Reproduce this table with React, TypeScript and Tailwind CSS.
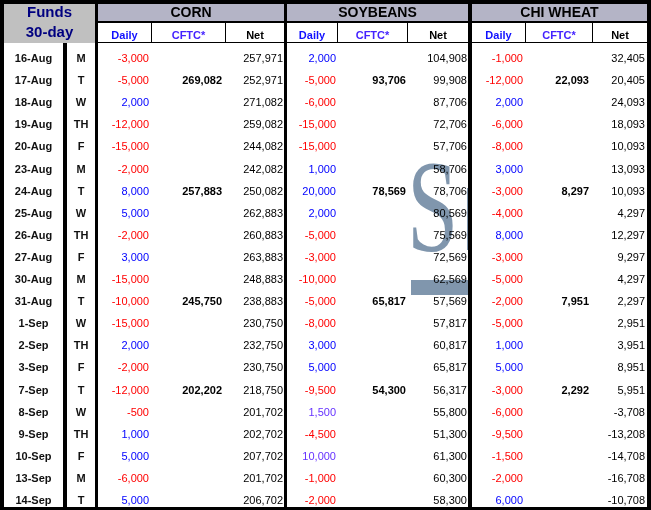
import React from "react";

type Row = {
  date: string;
  day: string;
  corn: [string, string, string];
  soy: [string, string, string];
  wheat: [string, string, string];
};

const r = (date: string, day: string, ...v: string[]): Row => ({
  date,
  day,
  corn: [v[0], v[1], v[2]],
  soy: [v[3], v[4], v[5]],
  wheat: [v[6], v[7], v[8]],
});

const rows: Row[] = [
  r("16-Aug", "M", "-3,000", "", "257,971", "2,000", "", "104,908", "-1,000", "", "32,405"),
  r("17-Aug", "T", "-5,000", "269,082", "252,971", "-5,000", "93,706", "99,908", "-12,000", "22,093", "20,405"),
  r("18-Aug", "W", "2,000", "", "271,082", "-6,000", "", "87,706", "2,000", "", "24,093"),
  r("19-Aug", "TH", "-12,000", "", "259,082", "-15,000", "", "72,706", "-6,000", "", "18,093"),
  r("20-Aug", "F", "-15,000", "", "244,082", "-15,000", "", "57,706", "-8,000", "", "10,093"),
  r("23-Aug", "M", "-2,000", "", "242,082", "1,000", "", "58,706", "3,000", "", "13,093"),
  r("24-Aug", "T", "8,000", "257,883", "250,082", "20,000", "78,569", "78,706", "-3,000", "8,297", "10,093"),
  r("25-Aug", "W", "5,000", "", "262,883", "2,000", "", "80,569", "-4,000", "", "4,297"),
  r("26-Aug", "TH", "-2,000", "", "260,883", "-5,000", "", "75,569", "8,000", "", "12,297"),
  r("27-Aug", "F", "3,000", "", "263,883", "-3,000", "", "72,569", "-3,000", "", "9,297"),
  r("30-Aug", "M", "-15,000", "", "248,883", "-10,000", "", "62,569", "-5,000", "", "4,297"),
  r("31-Aug", "T", "-10,000", "245,750", "238,883", "-5,000", "65,817", "57,569", "-2,000", "7,951", "2,297"),
  r("1-Sep", "W", "-15,000", "", "230,750", "-8,000", "", "57,817", "-5,000", "", "2,951"),
  r("2-Sep", "TH", "2,000", "", "232,750", "3,000", "", "60,817", "1,000", "", "3,951"),
  r("3-Sep", "F", "-2,000", "", "230,750", "5,000", "", "65,817", "5,000", "", "8,951"),
  r("7-Sep", "T", "-12,000", "202,202", "218,750", "-9,500", "54,300", "56,317", "-3,000", "2,292", "5,951"),
  r("8-Sep", "W", "-500", "", "201,702", "1,500", "", "55,800", "-6,000", "", "-3,708"),
  r("9-Sep", "TH", "1,000", "", "202,702", "-4,500", "", "51,300", "-9,500", "", "-13,208"),
  r("10-Sep", "F", "5,000", "", "207,702", "10,000", "", "61,300", "-1,500", "", "-14,708"),
  r("13-Sep", "M", "-6,000", "", "201,702", "-1,000", "", "60,300", "-2,000", "", "-16,708"),
  r("14-Sep", "T", "5,000", "", "206,702", "-2,000", "", "58,300", "6,000", "", "-10,708"),
];

// a couple of soybean entries are typed in a violet shade in the sheet
const violet = new Set(["8-Sep", "10-Sep"]);

type Group = {
  key: "corn" | "soy" | "wheat";
  title: string;
  width: string;
  cols: [string, string, string];
  pads: [string, string, string];
  after: string;
};

const groups: Group[] = [
  {
    key: "corn",
    title: "CORN",
    width: "w-[186px]",
    cols: ["w-[54px]", "w-[74px]", "w-[58px]"],
    pads: ["pr-[3px]", "pr-[4px]", "pr-[1px]"],
    after: "w-[3px]",
  },
  {
    key: "soy",
    title: "SOYBEANS",
    width: "w-[181px]",
    cols: ["w-[51px]", "w-[70px]", "w-[60px]"],
    pads: ["pr-[2px]", "pr-[2px]", "pr-[1px]"],
    after: "w-[4px]",
  },
  {
    key: "wheat",
    title: "CHI WHEAT",
    width: "w-[175px]",
    cols: ["w-[54px]", "w-[67px]", "w-[54px]"],
    pads: ["pr-[3px]", "pr-[4px]", "pr-[2px]"],
    after: "",
  },
];

function dailyColor(v: string, violetShade: boolean) {
  if (v.startsWith("-")) return "text-[#ff0000]";
  if (violetShade) return "text-[#6633ff]";
  return "text-[#0000ff]";
}

function Watermark() {
  return (
    <svg
      className="absolute left-[402px] top-[146px] pointer-events-none mix-blend-multiply"
      width="72"
      height="150"
      viewBox="0 0 72 150"
    >
      <g fill="#4f6e8e" fillOpacity="0.72">
        <text
          transform="translate(1 101) scale(0.7 1)"
          fontFamily="'Liberation Serif', 'Times New Roman', serif"
          fontSize="132"
        >
          S
        </text>
        <rect x="61" y="38" width="2" height="62" />
        <rect x="5" y="130" width="60" height="15" />
      </g>
    </svg>
  );
}

export default function App() {
  return (
    <div className="relative flex h-[510px] w-[651px] flex-col border-t-4 border-r-4 border-l-4 border-b-[3px] border-black bg-white font-['Liberation_Sans',Arial,sans-serif] text-black">
      {/* header */}
      <div className="flex h-[39px] shrink-0">
        <div className="flex w-[91px] flex-col items-center bg-[#c0c0c0] text-[15px] font-bold leading-[20px] text-[#000080]">
          <span className="-mt-[2px]">Funds</span>
          <span>30-day</span>
        </div>
        <div className="w-[3px] bg-black" />
        {groups.map((g) => (
          <React.Fragment key={g.key}>
            <div className={`flex flex-col ${g.width}`}>
              <div className="flex h-[17px] items-center justify-center bg-[#b4b4c6] text-[14px] font-bold leading-[17px]">
                {g.title}
              </div>
              <div className="h-[2px] bg-black" />
              <div className="flex h-[19px] text-[11px] font-bold leading-[13px]">
                <div className={`flex items-end justify-center border-r border-black text-[#1010ff] ${g.cols[0]}`}>Daily</div>
                <div className={`flex items-end justify-center border-r border-black text-[#4422ff] ${g.cols[1]}`}>CFTC*</div>
                <div className={`flex items-end justify-center ${g.cols[2]}`}>Net</div>
              </div>
              <div className="h-px bg-black" />
            </div>
            {g.after && <div className={`bg-black ${g.after}`} />}
          </React.Fragment>
        ))}
      </div>

      {/* body */}
      <div className="grid min-h-0 flex-1 grid-rows-[repeat(21,minmax(0,1fr))] text-[11px] leading-[13px]">
        {rows.map((row) => (
          <div key={row.date} className="flex">
            <div className="flex w-[59px] items-end justify-center font-bold text-[#111]">{row.date}</div>
            <div className="w-[4px] bg-black" />
            <div className="flex w-[28px] items-end justify-center font-bold text-[#111]">{row.day}</div>
            <div className="w-[3px] bg-black" />
            {groups.map((g) => {
              const [daily, cftc, net] = row[g.key];
              const vio = g.key === "soy" && violet.has(row.date);
              return (
                <React.Fragment key={g.key}>
                  <div className={`flex items-end justify-end ${g.cols[0]} ${g.pads[0]} ${dailyColor(daily, vio)}`}>{daily}</div>
                  <div className={`flex items-end justify-end font-bold ${g.cols[1]} ${g.pads[1]}`}>{cftc}</div>
                  <div className={`flex items-end justify-end ${g.cols[2]} ${g.pads[2]}`}>{net}</div>
                  {g.after && <div className={`bg-black ${g.after}`} />}
                </React.Fragment>
              );
            })}
          </div>
        ))}
      </div>

      <Watermark />
    </div>
  );
}
